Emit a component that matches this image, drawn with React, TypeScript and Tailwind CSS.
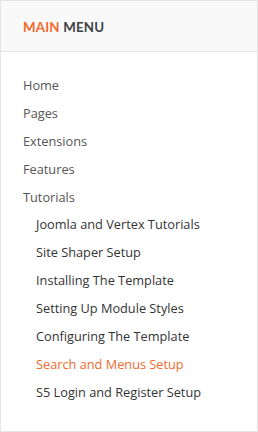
const TOP = ['Home', 'Pages', 'Extensions', 'Features', 'Tutorials'];
const SUB = [
  'Joomla and Vertex Tutorials',
  'Site Shaper Setup',
  'Installing The Template',
  'Setting Up Module Styles',
  'Configuring The Template',
  'Search and Menus Setup',
  'S5 Login and Register Setup',
];
const ACTIVE = 'Search and Menus Setup';

export default function App() {
  return (
    <div className="w-[258px] h-[432px] border border-[#e5e5e5] bg-white font-['Open_Sans',sans-serif]">
      <div className="h-[51px] bg-[#f9f9f9] border-b border-[#e5e5e5] pl-[22px] flex items-center">
        <h3 className="text-[13.3px] font-bold font-['Lato',sans-serif] tracking-[0.2px] pt-[4px]">
          <span className="text-[#f26a2e]">MAIN</span> <span className="text-[#3c4146]">MENU</span>
        </h3>
      </div>
      <ul className="pt-[20px] pl-[22px] text-[12.75px]">
        {TOP.map((t) => (
          <li key={t} className="h-[27.9px] leading-[27.9px] text-[#555]">{t}</li>
        ))}
        {SUB.map((s) => (
          <li
            key={s}
            className={`h-[27.9px] leading-[27.9px] pl-[13px] ${s === ACTIVE ? 'text-[#f26a2e]' : 'text-[#333]'}`}
          >
            {s}
          </li>
        ))}
      </ul>
    </div>
  );
}
